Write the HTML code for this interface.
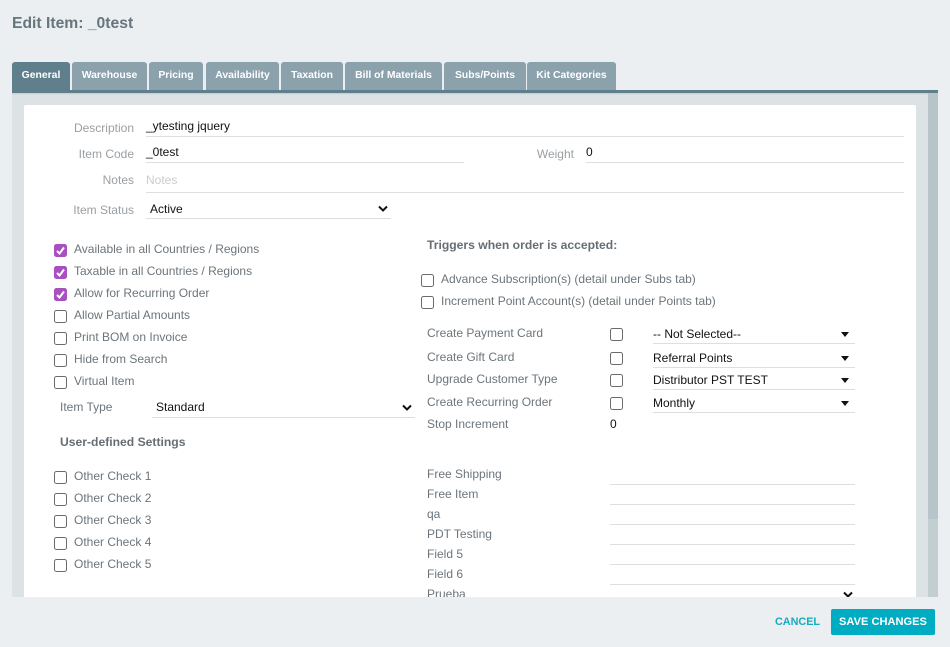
<!DOCTYPE html>
<html><head><meta charset="utf-8"><title>Edit Item</title>
<style>
html,body{margin:0;padding:0;width:950px;height:647px;overflow:hidden;background:#ebeff2;font-family:"Liberation Sans",sans-serif}
#a{position:absolute;left:0;top:0;width:950px;height:647px;overflow:hidden}
.b{position:absolute}
.t{position:absolute;white-space:nowrap;line-height:16px;font-size:12px;color:#6c757b}
.r{text-align:right}
.v{color:#111;font-size:12px}
.h{font-weight:bold;color:#666e74;font-size:12.15px}
.l{position:absolute;height:1px;background:#dcdfe1}
.c{position:absolute;width:11px;height:11px;border:1px solid #6b6b6b;border-radius:2.5px;background:#fff}
.k{background:#a94fc1;border-color:#a94fc1}
.k svg{position:absolute;left:0;top:0}
.tab{position:absolute;top:62px;height:28px;background:#8ba1ac;color:#fff;font-weight:bold;font-size:10.4px;line-height:27px;text-align:center;border-radius:3px 3px 0 0;white-space:nowrap}
.ar{position:absolute;width:0;height:0;border-left:4.5px solid transparent;border-right:4.5px solid transparent;border-top:5px solid #111}
</style></head><body><div id="a">
<div class="t" style="left:12px;top:15px;line-height:18px;font-size:15.7px;font-weight:bold;color:#66767d">Edit Item: _0test</div>

<div class="tab" style="left:12px;width:58px;background:#5f7f8c">General</div>
<div class="tab" style="left:72px;width:75px">Warehouse</div>
<div class="tab" style="left:149px;width:54px">Pricing</div>
<div class="tab" style="left:206px;width:73px">Availability</div>
<div class="tab" style="left:281px;width:62px">Taxation</div>
<div class="tab" style="left:345px;width:97px">Bill of Materials</div>
<div class="tab" style="left:444px;width:82px">Subs/Points</div>
<div class="tab" style="left:527px;width:89px">Kit Categories</div>

<div class="b" style="left:12px;top:90px;width:926px;height:507px;background:#dde2e5;border-radius:0 0 2px 2px"></div>
<div class="b" style="left:12px;top:90px;width:926px;height:3px;background:#5f7f8c"></div>
<div class="b" style="left:12px;top:93px;width:926px;height:2px;background:linear-gradient(#c3cbcf,#dde2e5)"></div>
<div class="b" style="left:928px;top:93px;width:10px;height:426px;background:#b7c4c9"></div>
<div class="b" style="left:928px;top:519px;width:10px;height:78px;background:#c3ced1"></div>
<div class="b" style="left:24px;top:105px;width:892px;height:492px;background:#fff;border-radius:2px 2px 0 0"></div>

<div class="t r" style="left:34px;width:100px;top:120px;color:#9a9fa3">Description</div>
<div class="t v" style="left:146px;top:118px">_ytesting jquery</div>
<div class="l" style="left:146px;top:136px;width:758px"></div>
<div class="t r" style="left:34px;width:100px;top:146px;color:#9a9fa3">Item Code</div>
<div class="t v" style="left:146px;top:144px">_0test</div>
<div class="l" style="left:146px;top:162px;width:318px"></div>
<div class="t r" style="left:474px;width:100px;top:146px;color:#9a9fa3">Weight</div>
<div class="t v" style="left:586px;top:144px">0</div>
<div class="l" style="left:586px;top:162px;width:318px"></div>
<div class="t r" style="left:34px;width:100px;top:172px;color:#9a9fa3">Notes</div>
<div class="t" style="left:146px;top:172px;color:#ccc">Notes</div>
<div class="l" style="left:146px;top:192px;width:758px"></div>
<div class="t r" style="left:34px;width:100px;top:202px;color:#9a9fa3">Item Status</div>
<div class="t v" style="left:150px;top:201px">Active</div>
<svg class="b" style="left:378px;top:205px" width="10" height="8" viewBox="0 0 10 8"><path d="M1 1.500L5 5.500L9 1.500" fill="none" stroke="#111" stroke-width="2"/></svg>
<div class="l" style="left:146px;top:218px;width:245px"></div>

<div class="c k" style="left:54px;top:244px"><svg width="11" height="11" viewBox="0 0 11 11"><path d="M2 6L4.500 8.500L9 2.500" fill="none" stroke="#fff" stroke-width="2"/></svg></div>
<div class="t" style="left:74px;top:241px">Available in all Countries / Regions</div>
<div class="c k" style="left:54px;top:266px"><svg width="11" height="11" viewBox="0 0 11 11"><path d="M2 6L4.500 8.500L9 2.500" fill="none" stroke="#fff" stroke-width="2"/></svg></div>
<div class="t" style="left:74px;top:263px">Taxable in all Countries / Regions</div>
<div class="c k" style="left:54px;top:288px"><svg width="11" height="11" viewBox="0 0 11 11"><path d="M2 6L4.500 8.500L9 2.500" fill="none" stroke="#fff" stroke-width="2"/></svg></div>
<div class="t" style="left:74px;top:285px">Allow for Recurring Order</div>
<div class="c" style="left:54px;top:310px"></div>
<div class="t" style="left:74px;top:307px">Allow Partial Amounts</div>
<div class="c" style="left:54px;top:332px"></div>
<div class="t" style="left:74px;top:329px">Print BOM on Invoice</div>
<div class="c" style="left:54px;top:354px"></div>
<div class="t" style="left:74px;top:351px">Hide from Search</div>
<div class="c" style="left:54px;top:376px"></div>
<div class="t" style="left:74px;top:373px">Virtual Item</div>
<div class="t" style="left:60px;top:399px">Item Type</div>
<div class="t v" style="left:156px;top:399px">Standard</div>
<svg class="b" style="left:402px;top:404px" width="10" height="8" viewBox="0 0 10 8"><path d="M1 1.500L5 5.500L9 1.500" fill="none" stroke="#111" stroke-width="2"/></svg>
<div class="l" style="left:152px;top:417px;width:263px"></div>

<div class="t h" style="left:60px;top:434px">User-defined Settings</div>
<div class="c" style="left:54px;top:471px"></div>
<div class="t" style="left:74px;top:468px">Other Check 1</div>
<div class="c" style="left:54px;top:493px"></div>
<div class="t" style="left:74px;top:490px">Other Check 2</div>
<div class="c" style="left:54px;top:515px"></div>
<div class="t" style="left:74px;top:512px">Other Check 3</div>
<div class="c" style="left:54px;top:537px"></div>
<div class="t" style="left:74px;top:534px">Other Check 4</div>
<div class="c" style="left:54px;top:559px"></div>
<div class="t" style="left:74px;top:556px">Other Check 5</div>

<div class="t h" style="left:427px;top:237px">Triggers when order is accepted:</div>
<div class="c" style="left:421px;top:274px"></div>
<div class="t" style="left:441px;top:271px">Advance Subscription(s) (detail under Subs tab)</div>
<div class="c" style="left:421px;top:296px"></div>
<div class="t" style="left:441px;top:293px">Increment Point Account(s) (detail under Points tab)</div>

<div class="t" style="left:427px;top:325px">Create Payment Card</div>
<div class="c" style="left:610px;top:328px"></div>
<div class="t v" style="left:653px;top:326px">-- Not Selected--</div>
<div class="ar" style="left:841px;top:332px"></div>
<div class="l" style="left:653px;top:343px;width:202px"></div>

<div class="t" style="left:427px;top:349px">Create Gift Card</div>
<div class="c" style="left:610px;top:352px"></div>
<div class="t v" style="left:653px;top:350px">Referral Points</div>
<div class="ar" style="left:841px;top:356px"></div>
<div class="l" style="left:653px;top:367px;width:202px"></div>

<div class="t" style="left:427px;top:371px">Upgrade Customer Type</div>
<div class="c" style="left:610px;top:374px"></div>
<div class="t v" style="left:653px;top:372px">Distributor PST TEST</div>
<div class="ar" style="left:841px;top:378px"></div>
<div class="l" style="left:653px;top:389px;width:202px"></div>

<div class="t" style="left:427px;top:394px">Create Recurring Order</div>
<div class="c" style="left:610px;top:397px"></div>
<div class="t v" style="left:653px;top:395px">Monthly</div>
<div class="ar" style="left:841px;top:401px"></div>
<div class="l" style="left:653px;top:412px;width:202px"></div>

<div class="t" style="left:427px;top:416px">Stop Increment</div>
<div class="t v" style="left:610px;top:416px">0</div>

<div class="t" style="left:427px;top:466px">Free Shipping</div>
<div class="l" style="left:610px;top:484px;width:245px"></div>
<div class="t" style="left:427px;top:486px">Free Item</div>
<div class="l" style="left:610px;top:504px;width:245px"></div>
<div class="t" style="left:427px;top:506px">qa</div>
<div class="l" style="left:610px;top:524px;width:245px"></div>
<div class="t" style="left:427px;top:526px">PDT Testing</div>
<div class="l" style="left:610px;top:544px;width:245px"></div>
<div class="t" style="left:427px;top:546px">Field 5</div>
<div class="l" style="left:610px;top:564px;width:245px"></div>
<div class="t" style="left:427px;top:566px">Field 6</div>
<div class="l" style="left:610px;top:584px;width:245px"></div>
<div class="t" style="left:427px;top:586px">Prueba</div>
<svg class="b" style="left:843px;top:591px" width="10" height="8" viewBox="0 0 10 8"><path d="M1 1.500L5 5.500L9 1.500" fill="none" stroke="#111" stroke-width="2"/></svg>

<div class="b" style="left:0;top:597px;width:950px;height:50px;background:#ebeff2"></div>
<div class="t" style="left:775px;top:614px;font-size:10.8px;font-weight:bold;color:#14abc3">CANCEL</div>
<div class="b" style="left:831px;top:609px;width:104px;height:26px;background:#00acc1;border-radius:2px;color:#fff;font-size:11.1px;font-weight:bold;line-height:26px;text-align:center;white-space:nowrap">SAVE CHANGES</div>
</div></body></html>
